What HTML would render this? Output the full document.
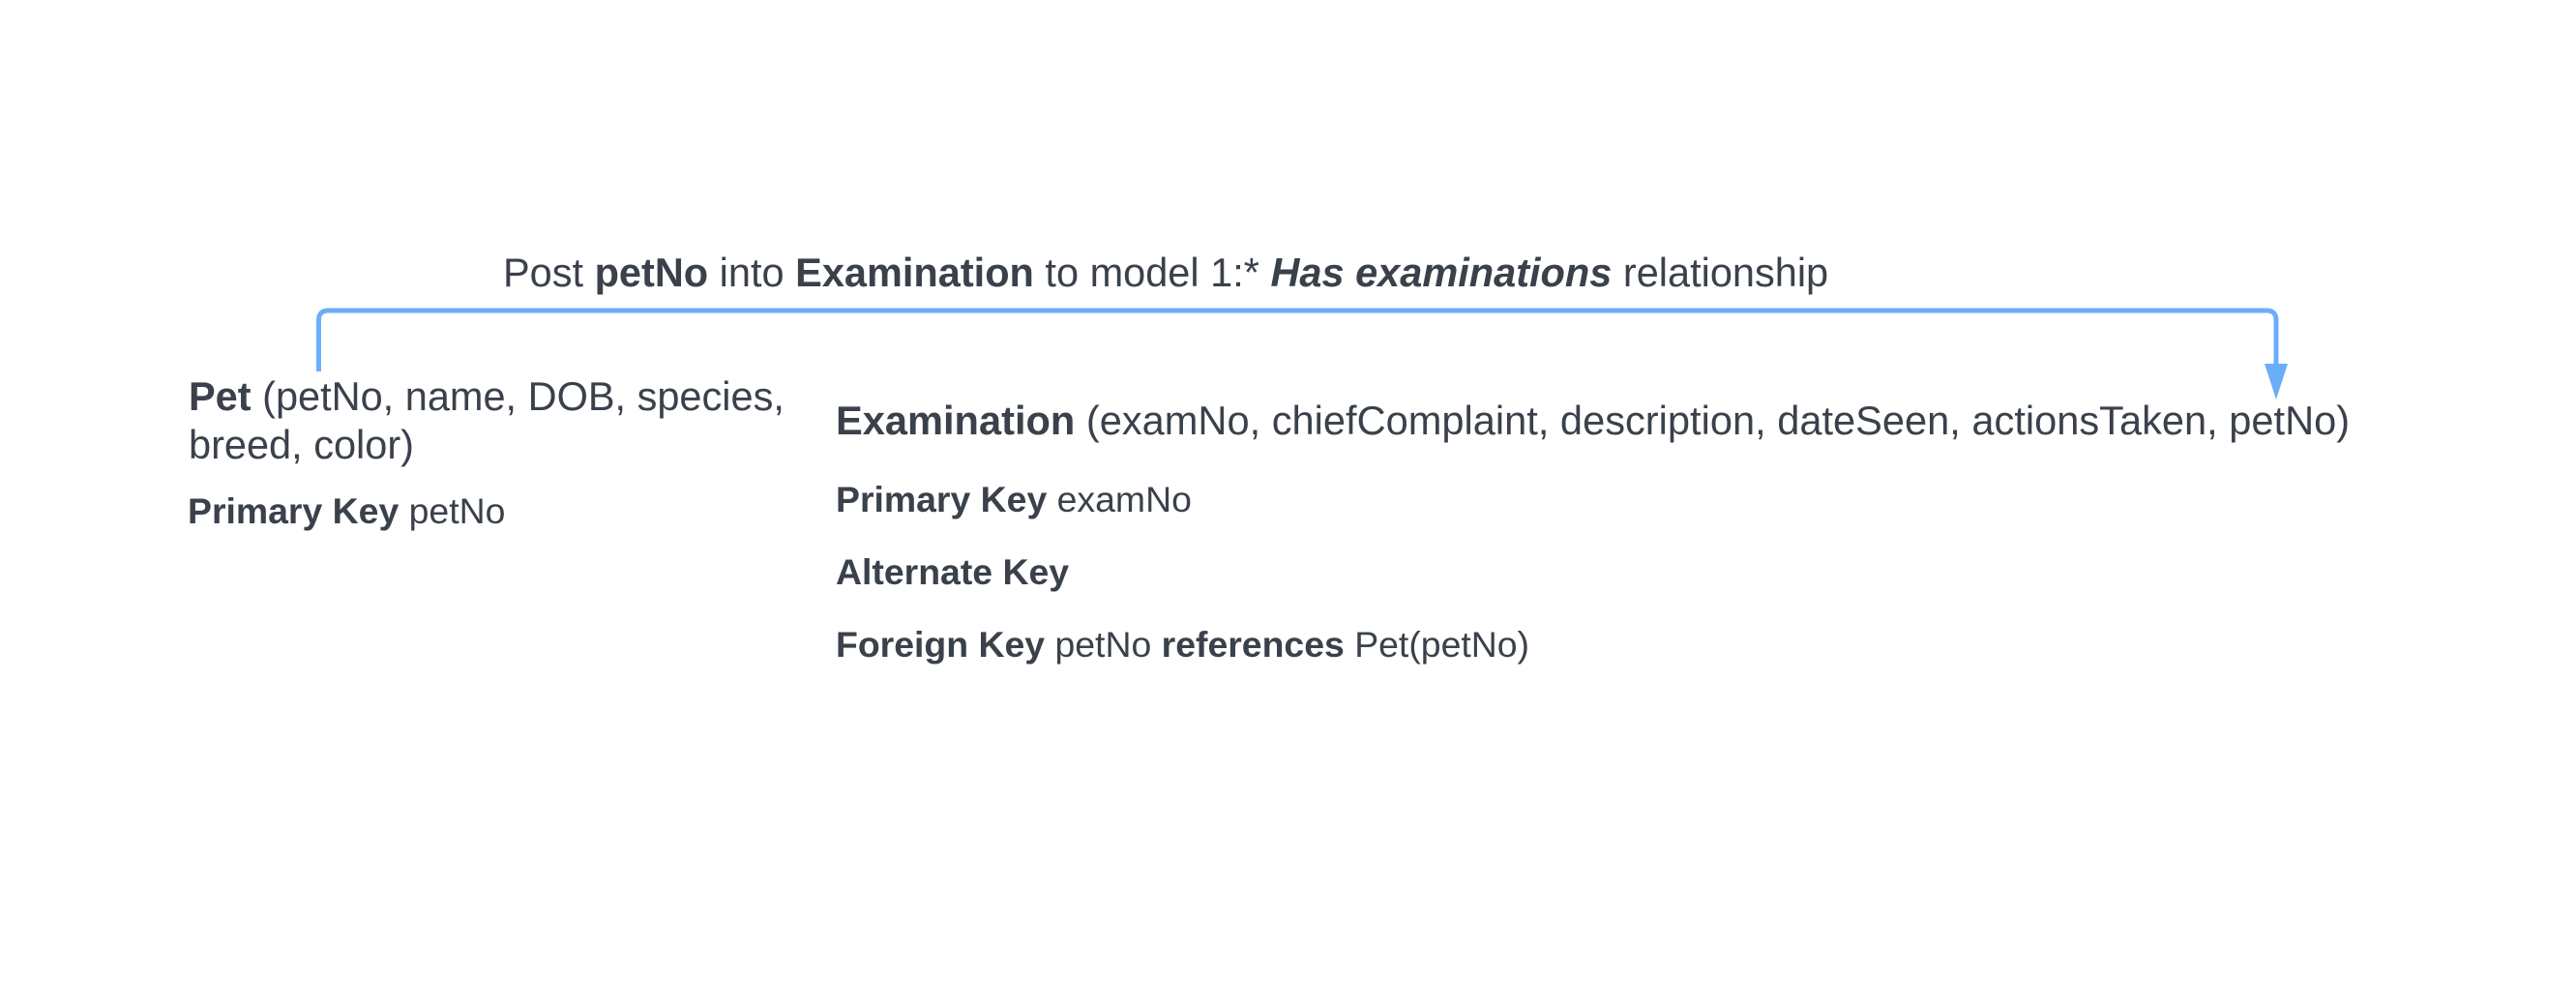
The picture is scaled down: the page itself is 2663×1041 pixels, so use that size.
<!DOCTYPE html>
<html><head><meta charset="utf-8"><style>
html,body{margin:0;padding:0;background:#fff;}
body{width:2663px;height:1041px;position:relative;overflow:hidden;font-family:"Liberation Sans",Arial,sans-serif;color:#3a414b;}
.t{position:absolute;white-space:nowrap;line-height:1;}
b{font-weight:bold;}
</style></head><body>
<svg width="2663" height="1041" style="position:absolute;left:0;top:0">
<path d="M329.5 384 V331 Q329.5 321 339.5 321 H2343 Q2353 321 2353 331 V380" fill="none" stroke="#6aaefa" stroke-width="5"/>
<polygon points="2341,376 2365,376 2353,413" fill="#6aaefa"/>
</svg>
<div class="t" style="left:520px;top:261px;font-size:41.5px;">Post <b>petNo</b> into <b>Examination</b> to model 1:* <b><i>Has examinations</i></b> relationship</div>
<div class="t" style="left:195px;top:385px;font-size:41.5px;line-height:50px;"><b>Pet</b> (petNo, name, DOB, species,<br>breed, color)</div>
<div class="t" style="left:194px;top:510px;font-size:37.4px;"><b>Primary Key</b> petNo</div>
<div class="t" style="left:864px;top:414px;font-size:41.6px;"><b>Examination</b> (examNo, chiefComplaint, description, dateSeen, actionsTaken, petNo)</div>
<div class="t" style="left:864px;top:498px;font-size:37.4px;"><b>Primary Key</b> examNo</div>
<div class="t" style="left:864px;top:573px;font-size:37.4px;"><b>Alternate Key</b></div>
<div class="t" style="left:864px;top:648px;font-size:37.4px;"><b>Foreign Key</b> petNo <b>references</b> Pet(petNo)</div>
</body></html>
